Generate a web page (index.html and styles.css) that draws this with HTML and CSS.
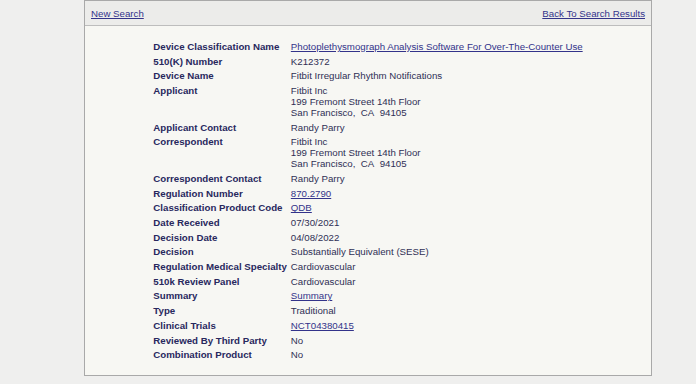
FILE: index.html
```html
<!DOCTYPE html>
<html lang="en">
<head>
    <meta charset="UTF-8">
    <meta name="viewport" content="width=device-width, initial-scale=1.0">
    <title>510(k) Premarket Notification</title>
    <link rel="stylesheet" href="styles.css">
</head>
<body>
    <div class="panel">
        <!-- Navigation bar -->
        <div class="navbar">
            <a href="#">New Search</a>
            <a href="#">Back To Search Results</a>
        </div>

        <!-- Record details -->
        <table class="details">
            <tr>
                <th>Device Classification Name</th>
                <td><a href="#">Photoplethysmograph Analysis Software For Over-The-Counter Use</a></td>
            </tr>
            <tr><th>510(K) Number</th><td>K212372</td></tr>
            <tr><th>Device Name</th><td>Fitbit Irregular Rhythm Notifications</td></tr>
            <tr>
                <th>Applicant</th>
                <td>Fitbit Inc<br>199 Fremont Street 14th Floor<br>San Francisco,&nbsp; CA&nbsp; 94105</td>
            </tr>
            <tr><th>Applicant Contact</th><td>Randy Parry</td></tr>
            <tr>
                <th>Correspondent</th>
                <td>Fitbit Inc<br>199 Fremont Street 14th Floor<br>San Francisco,&nbsp; CA&nbsp; 94105</td>
            </tr>
            <tr><th>Correspondent Contact</th><td>Randy Parry</td></tr>
            <tr><th>Regulation Number</th><td><a href="#">870.2790</a></td></tr>
            <tr><th>Classification Product Code</th><td><a href="#">QDB</a></td></tr>
            <tr><th>Date Received</th><td>07/30/2021</td></tr>
            <tr><th>Decision Date</th><td>04/08/2022</td></tr>
            <tr><th>Decision</th><td>Substantially Equivalent (SESE)</td></tr>
            <tr><th>Regulation Medical Specialty</th><td>Cardiovascular</td></tr>
            <tr><th>510k Review Panel</th><td>Cardiovascular</td></tr>
            <tr><th>Summary</th><td><a href="#">Summary</a></td></tr>
            <tr><th>Type</th><td>Traditional</td></tr>
            <tr><th>Clinical Trials</th><td><a href="#">NCT04380415</a></td></tr>
            <tr><th>Reviewed By Third Party</th><td>No</td></tr>
            <tr><th>Combination Product</th><td>No</td></tr>
        </table>
    </div>
</body>
</html>
```

FILE: styles.css
```css
body {
    margin: 0;
    background: #efefee;
    font-family: "Liberation Sans", Arial, sans-serif;
    font-size: 9.7px;
    color: #2f2f55;
}
a {
    color: #33338a;
    text-decoration: underline;
}
.panel {
    width: 566px;
    margin-left: 84px;
    background: #f7f7f3;
    border: 1px solid #a9a9a9;
    padding-bottom: 13px;
}
.navbar {
    display: flex;
    justify-content: space-between;
    height: 24px;
    align-items: center;
    padding: 0 6px;
    background: #ececea;
    border-bottom: 1px solid #bdbdbd;
}
.details {
    border-collapse: collapse;
    margin: 13px auto 0;
    line-height: 11px;
}
.details th,
.details td {
    padding: 1.85px 2px;
    text-align: left;
    vertical-align: top;
}
.details th {
    color: #28285e;
    font-weight: bold;
    white-space: nowrap;
}
```
